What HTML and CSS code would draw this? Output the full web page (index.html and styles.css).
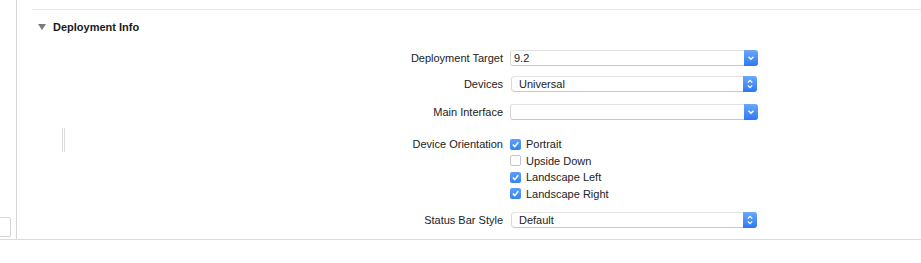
FILE: index.html
```html
<!DOCTYPE html>
<html>
	<head>
		<meta charset="UTF-8">
		<title>Deployment Info</title>
		<link rel="stylesheet" href="styles.css">
	</head>
	<body>
		<div class="page">
			<div class="sidebar">
				<div class="side-box"></div>
			</div>
			<div class="main">
				<div class="section">
					<div class="section-head">
						<span class="disclosure"></span>
						<span class="section-title">Deployment Info</span>
					</div>
					<div class="section-body">
						<div class="gutter">
							<div class="handle"></div>
						</div>
						<div class="form">
							<div class="row row-target">
								<div class="label">Deployment Target</div>
								<div class="popup">
									<span class="popup-text">9.2</span>
									<span class="popup-btn">
										<svg width="8" height="6" viewBox="0 0 8 6"><path d="M1.5 1.8 L4 4.2 L6.5 1.8" fill="none" stroke="#fff" stroke-width="1.4"/></svg>
									</span>
								</div>
							</div>
							<div class="row row-devices">
								<div class="label">Devices</div>
								<div class="popup stepper">
									<span class="popup-text">Universal</span>
									<span class="popup-btn">
										<svg width="8" height="12" viewBox="0 0 8 12"><path d="M1.8 4.6 L4 2.4 L6.2 4.6 M1.8 7.4 L4 9.6 L6.2 7.4" fill="none" stroke="#fff" stroke-width="1.3"/></svg>
									</span>
								</div>
							</div>
							<div class="row row-interface">
								<div class="label">Main Interface</div>
								<div class="popup">
									<span class="popup-text"></span>
									<span class="popup-btn">
										<svg width="8" height="6" viewBox="0 0 8 6"><path d="M1.5 1.8 L4 4.2 L6.5 1.8" fill="none" stroke="#fff" stroke-width="1.4"/></svg>
									</span>
								</div>
							</div>
							<div class="orientation">
								<div class="label">Device Orientation</div>
								<div class="checks">
									<div class="check-row">
										<span class="check on"><svg width="11" height="11" viewBox="0 0 11 11"><path d="M2.8 5.6 L4.7 7.6 L8.3 3.2" fill="none" stroke="#fff" stroke-width="1.5"/></svg></span>
										<span>Portrait</span>
									</div>
									<div class="check-row">
										<span class="check"></span>
										<span>Upside Down</span>
									</div>
									<div class="check-row">
										<span class="check on"><svg width="11" height="11" viewBox="0 0 11 11"><path d="M2.8 5.6 L4.7 7.6 L8.3 3.2" fill="none" stroke="#fff" stroke-width="1.5"/></svg></span>
										<span>Landscape Left</span>
									</div>
									<div class="check-row">
										<span class="check on"><svg width="11" height="11" viewBox="0 0 11 11"><path d="M2.8 5.6 L4.7 7.6 L8.3 3.2" fill="none" stroke="#fff" stroke-width="1.5"/></svg></span>
										<span>Landscape Right</span>
									</div>
								</div>
							</div>
							<div class="row row-status">
								<div class="label">Status Bar Style</div>
								<div class="popup stepper">
									<span class="popup-text">Default</span>
									<span class="popup-btn">
										<svg width="8" height="12" viewBox="0 0 8 12"><path d="M1.8 4.6 L4 2.4 L6.2 4.6 M1.8 7.4 L4 9.6 L6.2 7.4" fill="none" stroke="#fff" stroke-width="1.3"/></svg>
									</span>
								</div>
							</div>
						</div>
					</div>
				</div>
			</div>
		</div>
	</body>
</html>
```

FILE: styles.css
```css
* {
	box-sizing: border-box;
}

body {
	margin: 0;
	background: #fff;
	font-family: "Liberation Sans", Arial, sans-serif;
	font-size: 11px;
	color: #222;
}

.page {
	display: flex;
	height: 240px;
	border-bottom: 1px solid #dcdcdc;
}

.sidebar {
	width: 17px;
	border-right: 1px solid #d6d6d6;
	display: flex;
	flex-direction: column;
	justify-content: flex-end;
	padding-bottom: 2px;
}

.side-box {
	width: 11px;
	height: 20px;
	border: 1px solid #d4d4d4;
	border-left: none;
	border-radius: 0 2px 2px 0;
}

.main {
	flex: 1;
	padding-top: 9px;
}

.section {
	margin-left: 16px;
	border-top: 1px solid #e6e6e6;
	padding-top: 10px;
}

.section-head {
	display: flex;
	align-items: center;
	height: 14px;
	padding-left: 5px;
}

.disclosure {
	width: 0;
	height: 0;
	border-left: 4px solid transparent;
	border-right: 4px solid transparent;
	border-top: 6px solid #7a7a7a;
	margin-right: 7px;
}

.section-title {
	font-weight: bold;
	color: #1a1a1a;
}

.section-body {
	display: flex;
	margin-top: 16px;
}

.gutter {
	width: 32px;
	display: flex;
	justify-content: flex-end;
	align-items: flex-start;
}

.handle {
	width: 3px;
	height: 24px;
	margin-top: 78px;
	border-left: 1px solid #dedede;
	border-right: 1px solid #dedede;
}

.form {
	flex: 1;
}

.row {
	display: flex;
	align-items: center;
	height: 16px;
}

.row-devices {
	margin-top: 10px;
}

.row-interface {
	margin-top: 12px;
}

.row-status {
	margin-top: 10px;
}

.label {
	width: 445px;
	padding-right: 7px;
	text-align: right;
	white-space: nowrap;
}

.popup {
	display: flex;
	width: 248px;
	height: 16px;
	border: 1px solid #d8d8d8;
	border-top-color: #e2e2e2;
	border-bottom-color: #c8c8c8;
	border-radius: 3px;
	background: #fff;
}

.popup.stepper {
	margin-left: 1px;
	width: 246px;
	border-radius: 4px;
}

.popup-text {
	flex: 1;
	padding-left: 3px;
	line-height: 14px;
}

.stepper .popup-text {
	padding-left: 7px;
}

.popup-btn {
	width: 14px;
	margin: -1px -1px -1px 0;
	border-radius: 0 3px 3px 0;
	background: linear-gradient(#6aa8fb, #2f78f0);
	display: flex;
	align-items: center;
	justify-content: center;
}

.orientation {
	display: flex;
	margin-top: 16px;
}

.orientation .label {
	line-height: 16.5px;
}

.check-row {
	display: flex;
	align-items: center;
	height: 16.5px;
}

.check {
	width: 11px;
	height: 11px;
	margin-right: 5px;
	border: 1px solid #c4c4c4;
	border-radius: 2px;
	background: #fff;
	display: flex;
}

.check.on {
	border: none;
	background: linear-gradient(#5da0fa, #3583f3);
}
```
